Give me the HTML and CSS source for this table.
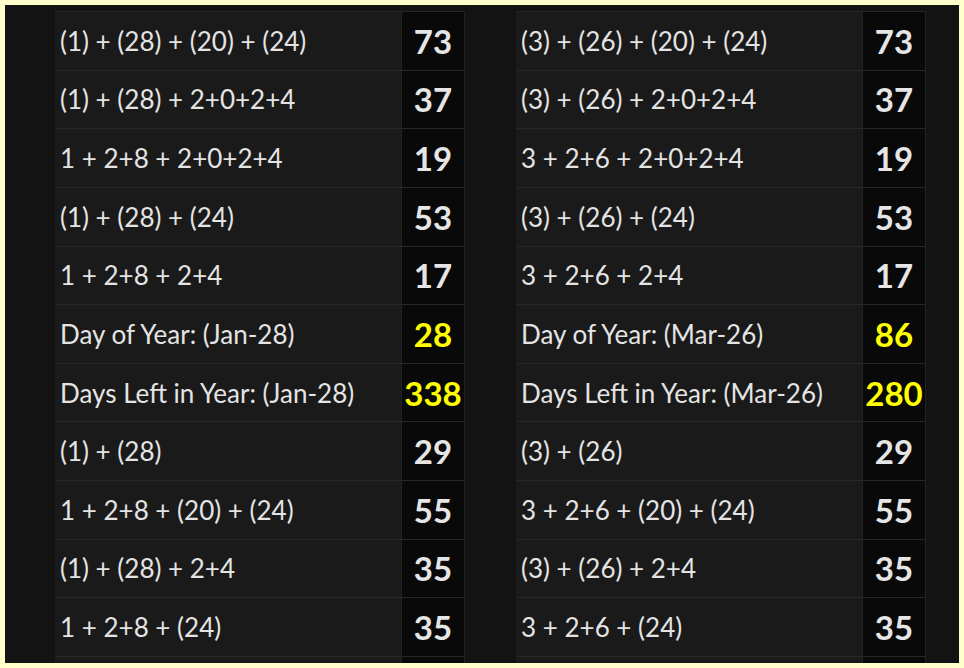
FILE: index.html
```html
<!DOCTYPE html>
<html>
<head>
<meta charset="utf-8">
<link rel="stylesheet" href="styles.css">
</head>
<body>
<div class="frame">
  <div class="tables">
    <div class="calc">
      <div class="row"><div class="expr">(1) + (28) + (20) + (24)</div><div class="num">73</div></div>
      <div class="row"><div class="expr">(1) + (28) + 2+0+2+4</div><div class="num">37</div></div>
      <div class="row"><div class="expr">1 + 2+8 + 2+0+2+4</div><div class="num">19</div></div>
      <div class="row"><div class="expr">(1) + (28) + (24)</div><div class="num">53</div></div>
      <div class="row"><div class="expr">1 + 2+8 + 2+4</div><div class="num">17</div></div>
      <div class="row"><div class="expr">Day of Year: (Jan-28)</div><div class="num hl">28</div></div>
      <div class="row"><div class="expr">Days Left in Year: (Jan-28)</div><div class="num hl">338</div></div>
      <div class="row"><div class="expr">(1) + (28)</div><div class="num">29</div></div>
      <div class="row"><div class="expr">1 + 2+8 + (20) + (24)</div><div class="num">55</div></div>
      <div class="row"><div class="expr">(1) + (28) + 2+4</div><div class="num">35</div></div>
      <div class="row"><div class="expr">1 + 2+8 + (24)</div><div class="num">35</div></div>
      <div class="row"><div class="expr">&nbsp;</div><div class="num">&nbsp;</div></div>
    </div>
    <div class="calc">
      <div class="row"><div class="expr">(3) + (26) + (20) + (24)</div><div class="num">73</div></div>
      <div class="row"><div class="expr">(3) + (26) + 2+0+2+4</div><div class="num">37</div></div>
      <div class="row"><div class="expr">3 + 2+6 + 2+0+2+4</div><div class="num">19</div></div>
      <div class="row"><div class="expr">(3) + (26) + (24)</div><div class="num">53</div></div>
      <div class="row"><div class="expr">3 + 2+6 + 2+4</div><div class="num">17</div></div>
      <div class="row"><div class="expr">Day of Year: (Mar-26)</div><div class="num hl">86</div></div>
      <div class="row"><div class="expr">Days Left in Year: (Mar-26)</div><div class="num hl">280</div></div>
      <div class="row"><div class="expr">(3) + (26)</div><div class="num">29</div></div>
      <div class="row"><div class="expr">3 + 2+6 + (20) + (24)</div><div class="num">55</div></div>
      <div class="row"><div class="expr">(3) + (26) + 2+4</div><div class="num">35</div></div>
      <div class="row"><div class="expr">3 + 2+6 + (24)</div><div class="num">35</div></div>
      <div class="row"><div class="expr">&nbsp;</div><div class="num">&nbsp;</div></div>
    </div>
  </div>
</div>
</body>
</html>
```

FILE: styles.css
```css
html, body {
  margin: 0;
  padding: 0;
}
body {
  background: #ffffcc;
  padding: 5px;
  width: 954px;
  height: 658px;
}
.frame {
  background-color: #131313;
  height: 658px;
  overflow: hidden;
  padding: 6px 0 0 50px;
  box-sizing: border-box;
}
.tables {
  display: flex;
  gap: 51px;
}
.calc {
  width: 410px;
  display: flex;
  flex-direction: column;
}
.row {
  display: flex;
  height: 58.64px;
  box-sizing: border-box;
  border-top: 1px solid #272727;
}
.expr {
  width: 346px;
  background: #1a1a1a;
  color: #e4e4e4;
  font-family: Lato, "Noto Sans", sans-serif;
  font-size: 26px;
  padding-left: 5px;
  box-sizing: border-box;
  display: flex;
  align-items: center;
  white-space: nowrap;
}
.num {
  width: 64px;
  background: #090909;
  border-left: 1px solid #222;
  border-right: 1px solid #222;
  box-sizing: border-box;
  color: #e6e6e6;
  font-family: Lato, "Noto Sans", sans-serif;
  font-weight: bold;
  font-size: 33px;
  display: flex;
  align-items: center;
  justify-content: center;
  white-space: nowrap;
}
.num.hl {
  color: #ffff00;
}
```
